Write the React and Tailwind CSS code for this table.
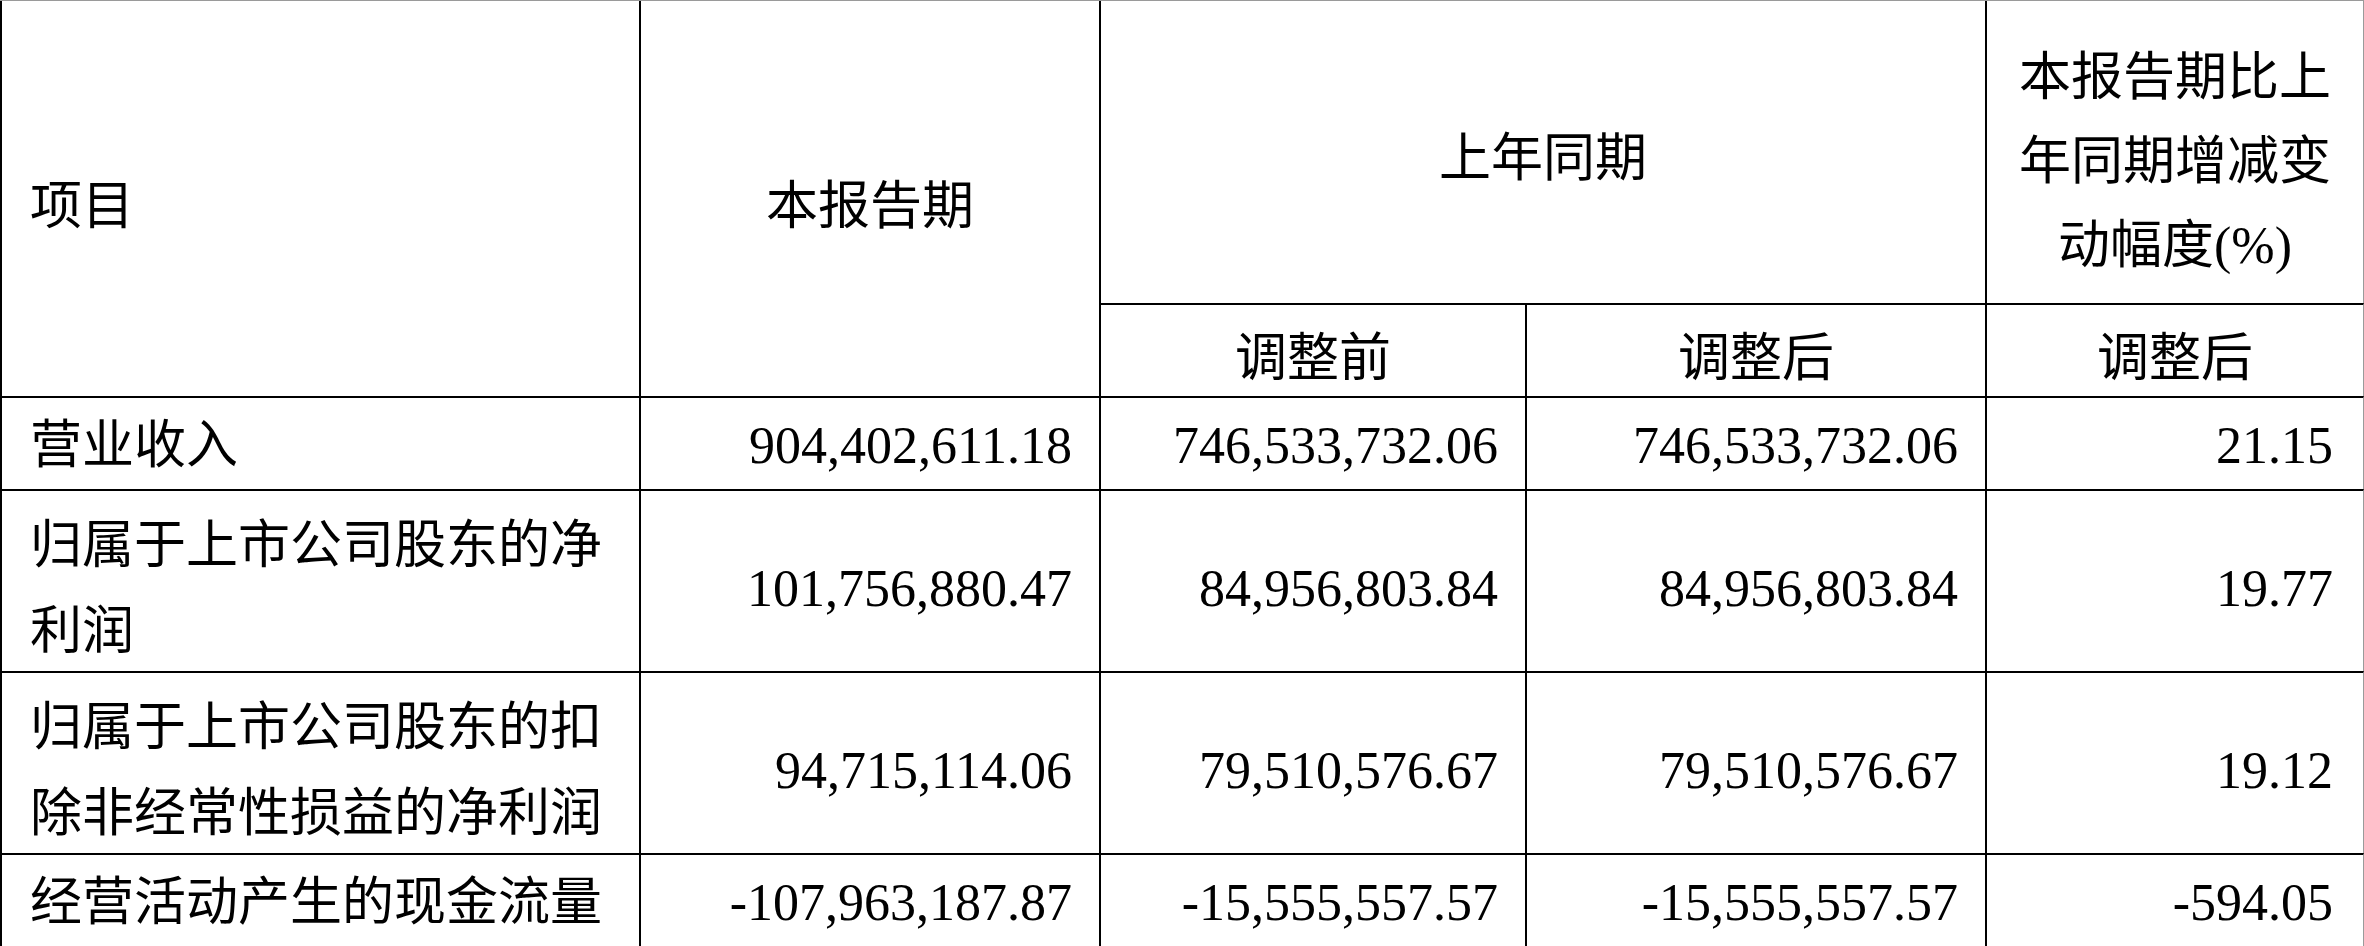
const rows = [
  {
    name: '营业收入',
    values: ['904,402,611.18', '746,533,732.06', '746,533,732.06', '21.15'],
    tall: false,
  },
  {
    name: '归属于上市公司股东的净利润',
    values: ['101,756,880.47', '84,956,803.84', '84,956,803.84', '19.77'],
    tall: true,
  },
  {
    name: '归属于上市公司股东的扣除非经常性损益的净利润',
    values: ['94,715,114.06', '79,510,576.67', '79,510,576.67', '19.12'],
    tall: true,
  },
  {
    name: '经营活动产生的现金流量',
    values: ['-107,963,187.87', '-15,555,557.57', '-15,555,557.57', '-594.05'],
    tall: false,
    last: true,
  },
];

const App = () => {
  return (
    <div className="w-[2364px] h-[946px] bg-white text-black overflow-hidden font-['Liberation_Serif','Noto_Sans_CJK_SC',serif] text-[52px]">
      <div className="grid grid-cols-[639px_460px_426px_460px_379px] grid-rows-[302px_93px_93px_182px_182px_94px] w-full h-full border-t border-t-[#9a9a9a]">
        {/* header */}
        <div className="row-span-2 border-l-2 border-black flex items-center pl-[28px] pt-[16px] leading-[86px]">
          项目
        </div>
        <div className="row-span-2 border-l-2 border-black flex items-center justify-center pt-[16px] leading-[86px]">
          本报告期
        </div>
        <div className="col-span-2 border-l-2 border-black flex items-center justify-center pt-[14px] leading-[86px]">
          上年同期
        </div>
        <div className="border-l-2 border-r border-black border-r-[#9a9a9a] flex flex-col items-center justify-center pt-[20px] text-center">
          <div className="h-[84px] flex items-center">本报告期比上</div>
          <div className="h-[84px] flex items-center">年同期增减变</div>
          <div className="h-[84px] flex items-center">
            动幅度<span className="leading-none">(%)</span>
          </div>
        </div>
        <div className="border-l-2 border-t-2 border-black flex items-center justify-center pt-[16px] leading-[86px]">
          调整前
        </div>
        <div className="border-l-2 border-t-2 border-black flex items-center justify-center pt-[16px] leading-[86px]">
          调整后
        </div>
        <div className="border-l-2 border-t-2 border-r border-black border-r-[#9a9a9a] flex items-center justify-center pt-[16px] leading-[86px]">
          调整后
        </div>

        {/* body */}
        {rows.map((r) => (
          <div key={r.name} className="contents">
            <div
              className={`border-l-2 border-t-2 border-black flex items-center pl-[28px] pr-[8px] leading-[86px] ${
                r.tall ? 'pt-[16px]' : 'pt-[4px]'
              } ${r.last ? 'border-b border-b-[#9a9a9a]' : ''}`}
            >
              {r.name}
            </div>
            {r.values.map((v, i) => (
              <div
                key={i}
                className={`border-l-2 border-t-2 border-black flex items-center justify-end leading-[86px] ${
                  i === 3 ? 'pr-[30px] border-r border-r-[#9a9a9a]' : 'pr-[27px]'
                } ${r.tall ? 'pt-[16px]' : 'pt-[4px]'} ${r.last ? 'border-b border-b-[#9a9a9a]' : ''}`}
              >
                {v}
              </div>
            ))}
          </div>
        ))}
      </div>
    </div>
  );
};

export default App;
